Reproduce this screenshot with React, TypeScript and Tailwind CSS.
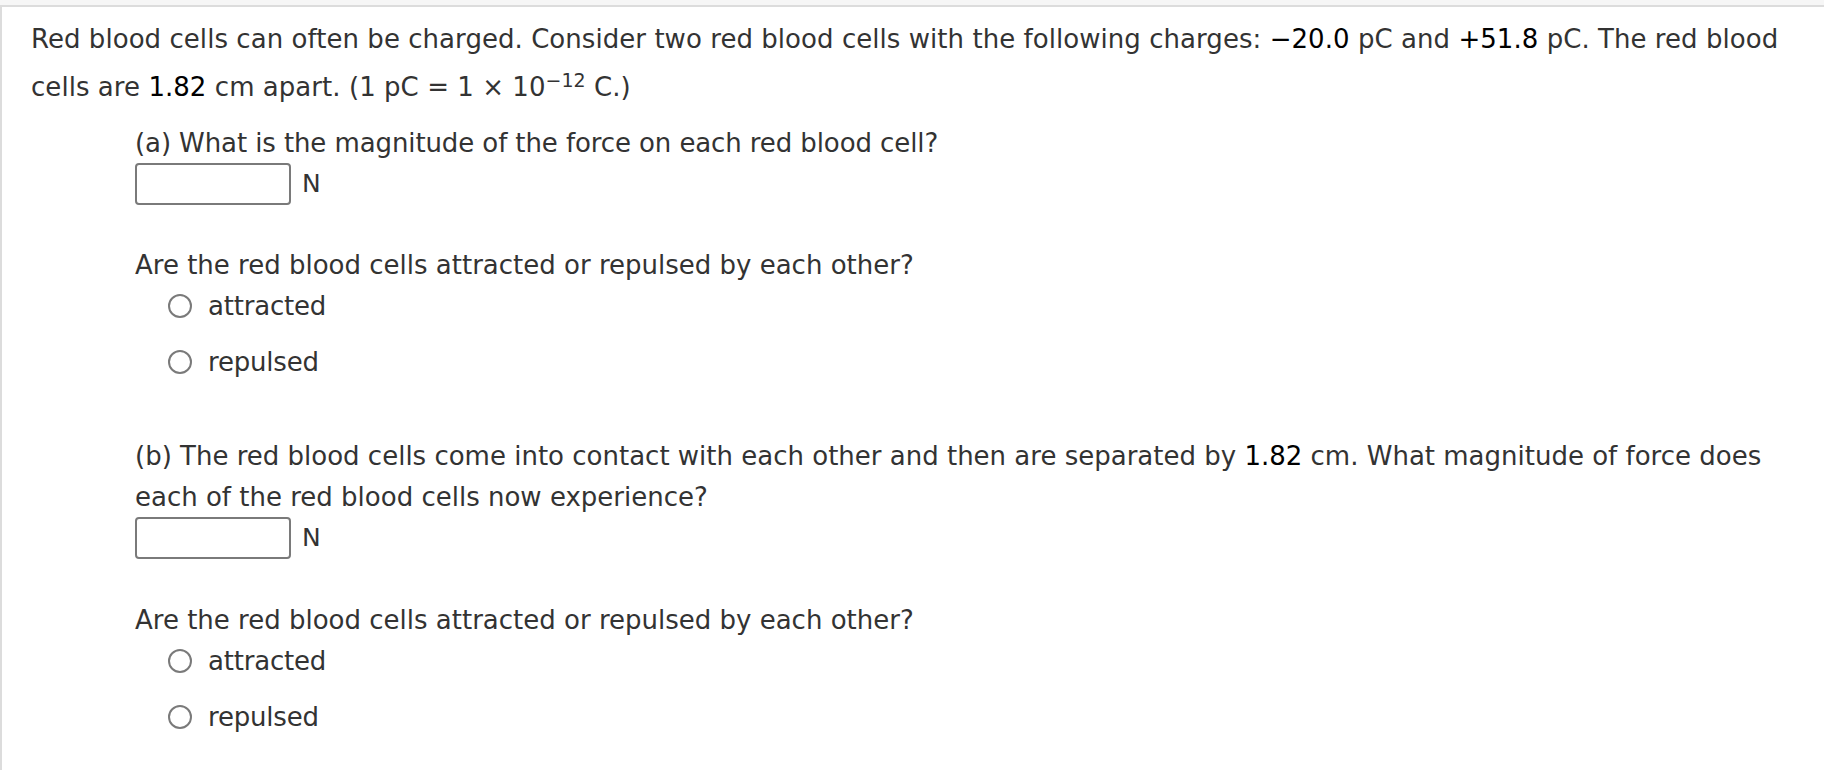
import React from 'react'

const font = { fontFamily: '"DejaVu Sans", Verdana, sans-serif' }

function Num({ children }: { children: React.ReactNode }) {
  return <span className="text-black">{children}</span>
}

function AnswerBox() {
  return (
    <div className="flex items-center gap-[11px] h-[42px] -mt-[1px]">
      <input
        type="text"
        className="w-[156px] h-[42px] border-2 border-[#7a7a7a] rounded-[4px] bg-white outline-none"
      />
      <span className="text-[25px]">N</span>
    </div>
  )
}

function Radio({ label }: { label: string }) {
  return (
    <label className="flex items-center gap-[16px] h-[40px]">
      <span className="w-[24px] h-[24px] rounded-full border-2 border-[#7a7a7a] bg-white" />
      <span className="tracking-[-0.2px]">{label}</span>
    </label>
  )
}

function AttractQuestion() {
  return (
    <div>
      <p className="leading-[41px]">Are the red blood cells attracted or repulsed by each other?</p>
      <div className="ml-[33px] flex flex-col gap-[16px]">
        <Radio label="attracted" />
        <Radio label="repulsed" />
      </div>
    </div>
  )
}

export default function App() {
  return (
    <div className="w-[1824px] h-[770px] bg-[#f6f6f6] pt-[5px] overflow-hidden" style={font}>
      <div className="h-full bg-white border-t-2 border-l-2 border-[#dcdcdc] pl-[29px] pt-[8px] text-[#333333]">
        <p className="leading-[48px] text-[26px] tracking-[0.05px] whitespace-nowrap">
          Red blood cells can often be charged. Consider two red blood cells with the following charges:{' '}
          <Num>−20.0</Num> pC and <Num>+51.8</Num> pC. The red blood
          <br />
          cells are <Num>1.82</Num> cm apart. (1 pC = 1 × 10
          <sup className="text-[19px] relative -top-[9px] leading-none align-baseline">−12</sup> C.)
        </p>

        <div className="ml-[104px] mt-[12px] text-[26px]">
          <p className="leading-[41px] tracking-[-0.1px]">(a) What is the magnitude of the force on each red blood cell?</p>
          <AnswerBox />

          <div className="mt-[40px]">
            <AttractQuestion />
          </div>

          <p className="leading-[41px] mt-[54px] whitespace-nowrap">
            (b) The red blood cells come into contact with each other and then are separated by <Num>1.82</Num> cm. What
            magnitude of force does
            <br />
            each of the red blood cells now experience?
          </p>
          <AnswerBox />

          <div className="mt-[41px]">
            <AttractQuestion />
          </div>
        </div>
      </div>
    </div>
  )
}
